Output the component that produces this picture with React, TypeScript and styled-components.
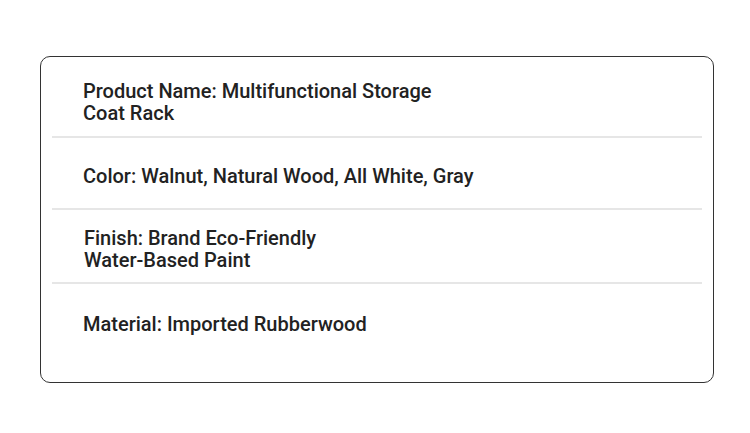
import React from 'react';
import styled, { createGlobalStyle } from 'styled-components';

const GlobalStyle = createGlobalStyle`
  html, body {
    margin: 0;
    padding: 0;
    background: #ffffff;
  }
  body {
    font-family: Roboto, "Liberation Sans", Arial, sans-serif;
  }
`;

const Page = styled.div`
  width: 750px;
  height: 433px;
  padding: 56px 36px 0 40px;
  box-sizing: border-box;
`;

const Card = styled.div`
  width: 674px;
  box-sizing: border-box;
  border: 1px solid #333333;
  border-radius: 10px;
  padding: 0 11px;
  background: #fff;
`;

const Row = styled.div<{ $height: number; $top: number; $last?: boolean }>`
  height: ${(p) => p.$height}px;
  padding-top: ${(p) => p.$top}px;
  box-sizing: border-box;
  border-bottom: ${(p) => (p.$last ? 'none' : '2px solid #e6e6e6')};
`;

const Text = styled.div<{ $indent?: number }>`
  padding-left: ${(p) => 31 + (p.$indent || 0)}px;
  font-size: 20px;
  font-weight: 500;
  line-height: 22px;
  color: #222222;
`;

const specs = [
  { lines: ['Product Name: Multifunctional Storage', 'Coat Rack'], height: 81, top: 23 },
  { lines: ['Color: Walnut, Natural Wood, All White, Gray'], height: 72, top: 27 },
  { lines: ['Finish: Brand Eco-Friendly', 'Water-Based Paint'], height: 74, top: 17, indent: 1 },
  { lines: ['Material: Imported Rubberwood'], height: 98, top: 29 },
];

const App = () => {
  return (
    <Page>
      <GlobalStyle />
      <Card>
        {specs.map((s, i) => (
          <Row key={i} $height={s.height} $top={s.top} $last={i === specs.length - 1}>
            <Text $indent={s.indent}>
              {s.lines.map((l, j) => (
                <div key={j}>{l}</div>
              ))}
            </Text>
          </Row>
        ))}
      </Card>
    </Page>
  );
};

export default App;
